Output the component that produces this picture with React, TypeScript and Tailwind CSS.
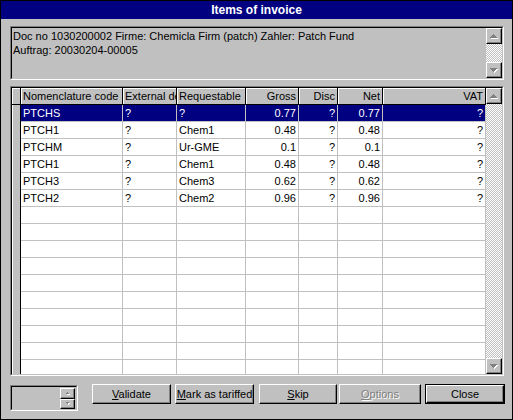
import React from 'react';

const raised =
  'border border-t-white border-l-white border-r-black border-b-black shadow-[inset_-1px_-1px_#808080]';

const Arrow = ({ dir, small }: { dir: 'up' | 'down'; small?: boolean }) => {
  const rows = small
    ? [
        [1, 0, 1],
        [0, 1, 3],
      ]
    : [
        [3, 0, 1],
        [2, 1, 3],
        [1, 2, 5],
        [0, 3, 7],
      ];
  const h = rows.length;
  const w = small ? 3 : 7;
  const shapes = rows.map(([x, y, len]) => [x, dir === 'up' ? y : h - 1 - y, len]);
  return (
    <svg width={w + 1} height={h + 1} shapeRendering="crispEdges">
      {shapes.map(([x, y, len], i) => (
        <rect key={'s' + i} x={x + 1} y={y + 1} width={len} height={1} fill="#ffffff" />
      ))}
      {shapes.map(([x, y, len], i) => (
        <rect key={'a' + i} x={x} y={y} width={len} height={1} fill="#808080" />
      ))}
    </svg>
  );
};

const ScrollBtn = ({ dir }: { dir: 'up' | 'down' }) => (
  <div className={`flex h-4 w-4 shrink-0 items-center justify-center bg-[#c0c0c0] ${raised}`}>
    <Arrow dir={dir} />
  </div>
);

const Track = () => (
  <div className="flex-1 bg-[repeating-conic-gradient(#c0c0c0_0_25%,#ffffff_0_50%)] bg-[length:2px_2px]" />
);

const VScroll = () => (
  <div className="flex w-4 shrink-0 flex-col">
    <ScrollBtn dir="up" />
    <Track />
    <ScrollBtn dir="down" />
  </div>
);

const Sunken = ({ className, children }: { className: string; children: React.ReactNode }) => (
  <div className={`border border-t-[#808080] border-l-[#808080] border-r-white border-b-white ${className}`}>
    <div className="flex h-full w-full border border-t-black border-l-black border-r-[#c0c0c0] border-b-[#c0c0c0]">
      {children}
    </div>
  </div>
);

const cols = [
  { w: 'w-[102px]', label: 'Nomenclature code', right: false },
  { w: 'w-[54px]', label: 'External de', right: false },
  { w: 'w-[69px]', label: 'Requestable', right: false },
  { w: 'w-[53px]', label: 'Gross', right: true },
  { w: 'w-[39px]', label: 'Disc', right: true },
  { w: 'w-[45px]', label: 'Net', right: true },
  { w: 'w-[103px]', label: 'VAT', right: true },
];

const rows: string[][] = [
  ['PTCHS', '?', '?', '0.77', '?', '0.77', '?'],
  ['PTCH1', '?', 'Chem1', '0.48', '?', '0.48', '?'],
  ['PTCHM', '?', 'Ur-GME', '0.1', '?', '0.1', '?'],
  ['PTCH1', '?', 'Chem1', '0.48', '?', '0.48', '?'],
  ['PTCH3', '?', 'Chem3', '0.62', '?', '0.62', '?'],
  ['PTCH2', '?', 'Chem2', '0.96', '?', '0.96', '?'],
  ...Array.from({ length: 10 }, () => ['', '', '', '', '', '', '']),
];

const Button = ({
  className,
  children,
  isDefault,
  disabled,
}: {
  className: string;
  children: React.ReactNode;
  isDefault?: boolean;
  disabled?: boolean;
}) => (
  <div className={`h-[20px] ${isDefault ? 'border border-black' : ''} ${className}`}>
    <div
      className={`flex h-full w-full items-center justify-center bg-[#c0c0c0] leading-none ${raised} ${
        disabled ? 'text-[#808080] [text-shadow:1px_1px_#ffffff]' : 'text-black'
      }`}
    >
      {children}
    </div>
  </div>
);

export default function App() {
  return (
    <div className="flex h-[420px] w-[513px] flex-col border border-black bg-[#c0c0c0] font-['Liberation_Sans',Arial,sans-serif] text-[11px] text-black">
      <div className="flex h-[18px] shrink-0 items-center justify-center bg-[#000080] text-[12px] font-bold text-white">
        Items of invoice
      </div>

      <div className="flex flex-1 flex-col pl-[9px] pt-[7px]">
        <Sunken className="h-[54px] w-[494px]">
          <div className="flex-1 pl-px pt-px leading-[14px]">
            <div>Doc no 1030200002 Firme: Chemicla Firm (patch) Zahler: Patch Fund</div>
            <div>Auftrag: 20030204-00005</div>
          </div>
          <VScroll />
        </Sunken>

        <Sunken className="mt-[6px] h-[290px] w-[494px]">
          <div className="flex flex-1 overflow-hidden bg-white">
            {/* row indicator strip */}
            <div className="flex w-[9px] shrink-0 flex-col">
              <div className="h-[17px] shrink-0 border-r border-b border-black bg-[#c0c0c0] shadow-[inset_1px_1px_#fff]" />
              <div className="flex-1 border-r border-black bg-[#c0c0c0] shadow-[inset_1px_0_#fff]" />
            </div>
            <div className="flex flex-1 flex-col overflow-hidden">
              <div className="flex shrink-0">
                {cols.map((c) => (
                  <div
                    key={c.label}
                    className={`${c.w} h-[17px] shrink-0 overflow-hidden whitespace-nowrap border-r border-b border-black bg-[#c0c0c0] px-[2px] leading-[16px] shadow-[inset_1px_1px_#fff] ${
                      c.right ? 'text-right' : 'text-left'
                    }`}
                  >
                    {c.label}
                  </div>
                ))}
              </div>
              {rows.map((r, i) => {
                const sel = i === 0;
                return (
                  <div key={i} className="flex shrink-0">
                    {cols.map((c, j) => (
                      <div
                        key={j}
                        className={`${c.w} h-[17px] shrink-0 overflow-hidden whitespace-nowrap border-r border-b border-[#c0c0c0] px-[2px] leading-[16px] ${
                          c.right ? 'text-right' : 'text-left'
                        } ${sel ? 'bg-[#000080] text-white' : ''}`}
                      >
                        {r[j]}
                      </div>
                    ))}
                  </div>
                );
              })}
            </div>
          </div>
          <VScroll />
        </Sunken>

        <div className="mt-[8px] flex items-start">
          <Sunken className="mt-px h-[26px] w-[68px]">
            <div className="flex flex-1 justify-end pr-px pt-px">
              <div className="flex flex-col">
                <div className={`flex h-[11px] w-[15px] items-center justify-center bg-[#c0c0c0] ${raised}`}>
                  <Arrow dir="up" small />
                </div>
                <div className={`flex h-[11px] w-[15px] items-center justify-center bg-[#c0c0c0] ${raised}`}>
                  <Arrow dir="down" small />
                </div>
              </div>
            </div>
          </Sunken>
          <Button className="ml-[14px] w-[79px]">
            <span>
              <u>V</u>alidate
            </span>
          </Button>
          <Button className="ml-[4px] w-[79px]">
            <span>
              <u>M</u>ark as tariffed
            </span>
          </Button>
          <Button className="ml-[5px] w-[78px]">
            <span>
              <u>S</u>kip
            </span>
          </Button>
          <Button className="ml-[2px] w-[82px]" disabled>
            <span>
              <u>O</u>ptions
            </span>
          </Button>
          <Button className="ml-[4px] w-[80px]" isDefault>
            <span>Close</span>
          </Button>
        </div>
      </div>
    </div>
  );
}
